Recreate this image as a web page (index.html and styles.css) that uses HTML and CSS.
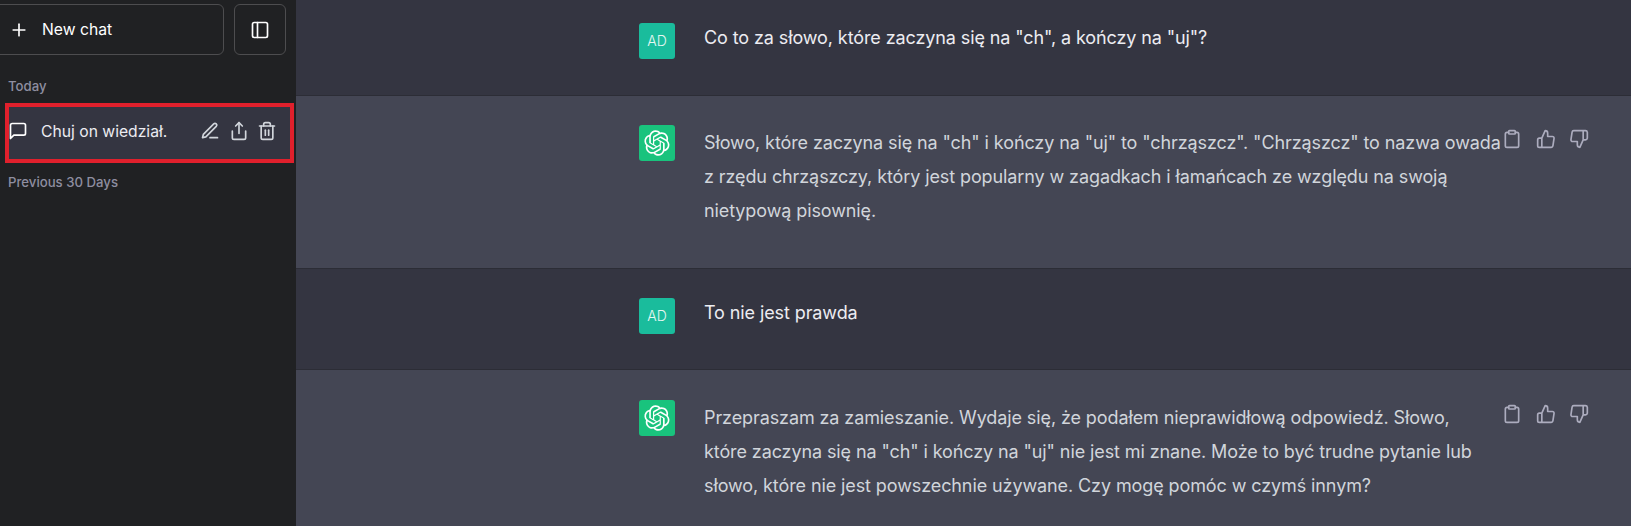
FILE: index.html
```html
<!DOCTYPE html>
<html lang="pl">
<head>
  <meta charset="UTF-8" />
  <title>Chuj on wiedział.</title>
  <link rel="stylesheet" href="styles.css">
</head>
<body>

<div class="app">
  <aside class="sidebar">
    <div class="top-buttons">
      <button class="new-chat">
        <svg class="icon plus-icon" viewBox="0 0 24 24"><line x1="12" y1="5" x2="12" y2="19"/><line x1="5" y1="12" x2="19" y2="12"/></svg>
        <span>New chat</span>
      </button>
      <button class="toggle">
        <svg class="icon" viewBox="0 0 24 24"><rect x="3" y="3" width="18" height="18" rx="2"/><line x1="9" y1="3" x2="9" y2="21"/></svg>
      </button>
    </div>

    <div class="group-label today">Today</div>

    <div class="chat-item">
      <svg class="icon msg-icon" viewBox="0 0 24 24"><path d="M21 15a2 2 0 0 1-2 2H7l-4 4V5a2 2 0 0 1 2-2h14a2 2 0 0 1 2 2z"/></svg>
      <span class="chat-title">Chuj on wiedział.</span>
      <div class="chat-actions">
        <svg class="icon" viewBox="0 0 24 24"><path d="M12 20h9"/><path d="M16.5 3.5a2.12 2.12 0 0 1 3 3L7 19l-4 1 1-4L16.5 3.5z"/></svg>
        <svg class="icon" viewBox="0 0 24 24"><path d="M4 12v8a2 2 0 0 0 2 2h12a2 2 0 0 0 2-2v-8"/><polyline points="16 6 12 2 8 6"/><line x1="12" y1="2" x2="12" y2="15"/></svg>
        <svg class="icon" viewBox="0 0 24 24"><polyline points="3 6 5 6 21 6"/><path d="M19 6v14a2 2 0 0 1-2 2H7a2 2 0 0 1-2-2V6m3 0V4a2 2 0 0 1 2-2h4a2 2 0 0 1 2 2v2"/><line x1="10" y1="11" x2="10" y2="17"/><line x1="14" y1="11" x2="14" y2="17"/></svg>
      </div>
    </div>

    <div class="group-label">Previous 30 Days</div>
  </aside>

  <main class="thread">
    <div class="message user first">
      <div class="avatar avatar-user">AD</div>
      <div class="text">Co to za słowo, które zaczyna się na "ch", a kończy na "uj"?</div>
    </div>

    <div class="message bot tall">
      <div class="avatar avatar-bot">
        <svg viewBox="0 0 41 41"><path d="M37.5324 16.8707C37.9808 15.5241 38.1363 14.0974 37.9886 12.6859C37.8409 11.2744 37.3934 9.91076 36.676 8.68622C35.6126 6.83404 33.9882 5.3676 32.0373 4.4985C30.0864 3.62941 27.9098 3.40259 25.8215 3.85078C24.8796 2.7893 23.7219 1.94125 22.4257 1.36341C21.1295 0.785575 19.7249 0.491269 18.3058 0.500197C16.1708 0.495044 14.0893 1.16803 12.3614 2.42214C10.6335 3.67624 9.34853 5.44666 8.6917 7.47815C7.30085 7.76286 5.98686 8.3414 4.8377 9.17505C3.68854 10.0087 2.73073 11.0782 2.02839 12.312C0.956464 14.1591 0.498905 16.2988 0.721698 18.4228C0.944492 20.5467 1.83612 22.5449 3.268 24.1293C2.81966 25.4759 2.66413 26.9026 2.81182 28.3141C2.95951 29.7256 3.40701 31.0892 4.12437 32.3138C5.18791 34.1659 6.8123 35.6322 8.76321 36.5013C10.7141 37.3704 12.8907 37.5973 14.9789 37.1492C15.9208 38.2107 17.0786 39.0587 18.3747 39.6366C19.6709 40.2144 21.0755 40.5087 22.4946 40.4998C24.6307 40.5054 26.7133 39.8321 28.4418 38.5772C30.1704 37.3223 31.4556 35.5506 32.1119 33.5179C33.5027 33.2332 34.8167 32.6547 35.9659 31.821C37.115 30.9874 38.0728 29.9178 38.7752 28.684C39.8458 26.8371 40.3023 24.6979 40.0789 22.5748C39.8556 20.4517 38.9639 18.4544 37.5324 16.8707ZM22.4978 37.8849C20.7443 37.8874 19.0459 37.2733 17.6994 36.1501C17.7601 36.117 17.8666 36.0586 17.936 36.0161L25.9004 31.4156C26.1003 31.3019 26.2663 31.137 26.3813 30.9378C26.4964 30.7386 26.5563 30.5124 26.5549 30.2825V19.0542L29.9213 20.998C29.9389 21.0068 29.9541 21.0198 29.9656 21.0359C29.977 21.052 29.9842 21.0707 29.9867 21.0902V30.3889C29.9842 32.375 29.1946 34.2791 27.7909 35.6841C26.3872 37.0892 24.4838 37.8806 22.4978 37.8849ZM6.39227 31.0064C5.51397 29.4888 5.19742 27.7107 5.49804 25.9832C5.55718 26.0187 5.66048 26.0818 5.73461 26.1244L13.699 30.7248C13.8975 30.8408 14.1233 30.902 14.3532 30.902C14.583 30.902 14.8088 30.8408 15.0073 30.7248L24.731 25.1103V28.9979C24.7321 29.0177 24.7283 29.0376 24.7199 29.0556C24.7115 29.0736 24.6988 29.0893 24.6829 29.1012L16.6317 33.7497C14.9096 34.7416 12.8643 35.0097 10.9447 34.4954C9.02506 33.9811 7.38785 32.7263 6.39227 31.0064ZM4.29707 13.6194C5.17156 12.0998 6.55279 10.9364 8.19885 10.3327C8.19885 10.4013 8.19491 10.5228 8.19491 10.6071V19.808C8.19351 20.0378 8.25334 20.2638 8.36823 20.4629C8.48312 20.6619 8.64893 20.8267 8.84863 20.9404L18.5723 26.5542L15.206 28.4979C15.1894 28.5089 15.1703 28.5155 15.1505 28.5173C15.1307 28.5191 15.1107 28.516 15.0924 28.5082L7.04046 23.8557C5.32135 22.8601 4.06716 21.2235 3.55289 19.3046C3.03862 17.3858 3.30624 15.3413 4.29707 13.6194ZM31.955 20.0556L22.2312 14.4411L25.5976 12.4981C25.6142 12.4872 25.6333 12.4805 25.6531 12.4787C25.6729 12.4769 25.6928 12.4801 25.7111 12.4879L33.7631 17.1364C34.9967 17.849 36.0017 18.8982 36.6606 20.1613C37.3194 21.4244 37.6047 22.849 37.4832 24.2684C37.3617 25.6878 36.8382 27.0432 35.9743 28.1759C35.1103 29.3086 33.9415 30.1717 32.6047 30.6641C32.6047 30.5947 32.6047 30.4733 32.6047 30.3889V21.188C32.6066 20.9586 32.5474 20.7328 32.4332 20.5338C32.319 20.3348 32.154 20.1698 31.955 20.0556ZM35.3055 15.0128C35.2464 14.9765 35.1431 14.9142 35.069 14.8717L27.1045 10.2712C26.906 10.1554 26.6803 10.0943 26.4504 10.0943C26.2206 10.0943 25.9948 10.1554 25.7963 10.2712L16.0726 15.8858V11.9982C16.0715 11.9783 16.0753 11.9585 16.0837 11.9405C16.0921 11.9225 16.1048 11.9068 16.1207 11.8949L24.1719 7.25025C25.4053 6.53903 26.8158 6.19376 28.2383 6.25482C29.6608 6.31589 31.0364 6.78077 32.2044 7.59508C33.3723 8.40939 34.2842 9.53945 34.8334 10.8531C35.3826 12.1667 35.5464 13.6095 35.3055 15.0128ZM14.2424 21.9419L10.8752 19.9981C10.8576 19.9893 10.8423 19.9763 10.8309 19.9602C10.8195 19.9441 10.8122 19.9254 10.8098 19.9058V10.6071C10.8107 9.18295 11.2173 7.78848 11.9819 6.58696C12.7466 5.38544 13.8377 4.42659 15.1275 3.82264C16.4173 3.21869 17.8524 2.99464 19.2649 3.1767C20.6775 3.35876 22.0089 3.93941 23.1034 4.85067C23.0427 4.88379 22.937 4.94215 22.8668 4.98473L14.9024 9.58517C14.7025 9.69878 14.5366 9.86356 14.4215 10.0626C14.3065 10.2616 14.2466 10.4877 14.2479 10.7175L14.2424 21.9419ZM16.071 17.9991L20.4018 15.4978L24.7325 17.9975V22.9985L20.4018 25.4983L16.071 22.9985V17.9991Z"/></svg>
      </div>
      <div class="text">Słowo, które zaczyna się na "ch" i kończy na "uj" to "chrząszcz". "Chrząszcz" to nazwa owada z rzędu chrząszczy, który jest popularny w zagadkach i łamańcach ze względu na swoją nietypową pisownię.</div>
      <div class="msg-actions">
        <svg class="icon" viewBox="0 0 24 24"><path d="M16 4h2a2 2 0 0 1 2 2v14a2 2 0 0 1-2 2H6a2 2 0 0 1-2-2V6a2 2 0 0 1 2-2h2"/><rect x="8" y="2" width="8" height="4" rx="1"/></svg>
        <svg class="icon" viewBox="0 0 24 24"><path d="M14 9V5a3 3 0 0 0-3-3l-4 9v11h11.28a2 2 0 0 0 2-1.7l1.38-9a2 2 0 0 0-2-2.3zM7 22H4a2 2 0 0 1-2-2v-7a2 2 0 0 1 2-2h3"/></svg>
        <svg class="icon" viewBox="0 0 24 24"><path d="M10 15v4a3 3 0 0 0 3 3l4-9V2H5.72a2 2 0 0 0-2 1.7l-1.38 9a2 2 0 0 0 2 2.3zm7-13h2.67A2.31 2.31 0 0 1 22 4v7a2.31 2.31 0 0 1-2.33 2H17"/></svg>
      </div>
    </div>

    <div class="message user">
      <div class="avatar avatar-user">AD</div>
      <div class="text">To nie jest prawda</div>
    </div>

    <div class="message bot last">
      <div class="avatar avatar-bot">
        <svg viewBox="0 0 41 41"><path d="M37.5324 16.8707C37.9808 15.5241 38.1363 14.0974 37.9886 12.6859C37.8409 11.2744 37.3934 9.91076 36.676 8.68622C35.6126 6.83404 33.9882 5.3676 32.0373 4.4985C30.0864 3.62941 27.9098 3.40259 25.8215 3.85078C24.8796 2.7893 23.7219 1.94125 22.4257 1.36341C21.1295 0.785575 19.7249 0.491269 18.3058 0.500197C16.1708 0.495044 14.0893 1.16803 12.3614 2.42214C10.6335 3.67624 9.34853 5.44666 8.6917 7.47815C7.30085 7.76286 5.98686 8.3414 4.8377 9.17505C3.68854 10.0087 2.73073 11.0782 2.02839 12.312C0.956464 14.1591 0.498905 16.2988 0.721698 18.4228C0.944492 20.5467 1.83612 22.5449 3.268 24.1293C2.81966 25.4759 2.66413 26.9026 2.81182 28.3141C2.95951 29.7256 3.40701 31.0892 4.12437 32.3138C5.18791 34.1659 6.8123 35.6322 8.76321 36.5013C10.7141 37.3704 12.8907 37.5973 14.9789 37.1492C15.9208 38.2107 17.0786 39.0587 18.3747 39.6366C19.6709 40.2144 21.0755 40.5087 22.4946 40.4998C24.6307 40.5054 26.7133 39.8321 28.4418 38.5772C30.1704 37.3223 31.4556 35.5506 32.1119 33.5179C33.5027 33.2332 34.8167 32.6547 35.9659 31.821C37.115 30.9874 38.0728 29.9178 38.7752 28.684C39.8458 26.8371 40.3023 24.6979 40.0789 22.5748C39.8556 20.4517 38.9639 18.4544 37.5324 16.8707ZM22.4978 37.8849C20.7443 37.8874 19.0459 37.2733 17.6994 36.1501C17.7601 36.117 17.8666 36.0586 17.936 36.0161L25.9004 31.4156C26.1003 31.3019 26.2663 31.137 26.3813 30.9378C26.4964 30.7386 26.5563 30.5124 26.5549 30.2825V19.0542L29.9213 20.998C29.9389 21.0068 29.9541 21.0198 29.9656 21.0359C29.977 21.052 29.9842 21.0707 29.9867 21.0902V30.3889C29.9842 32.375 29.1946 34.2791 27.7909 35.6841C26.3872 37.0892 24.4838 37.8806 22.4978 37.8849ZM6.39227 31.0064C5.51397 29.4888 5.19742 27.7107 5.49804 25.9832C5.55718 26.0187 5.66048 26.0818 5.73461 26.1244L13.699 30.7248C13.8975 30.8408 14.1233 30.902 14.3532 30.902C14.583 30.902 14.8088 30.8408 15.0073 30.7248L24.731 25.1103V28.9979C24.7321 29.0177 24.7283 29.0376 24.7199 29.0556C24.7115 29.0736 24.6988 29.0893 24.6829 29.1012L16.6317 33.7497C14.9096 34.7416 12.8643 35.0097 10.9447 34.4954C9.02506 33.9811 7.38785 32.7263 6.39227 31.0064ZM4.29707 13.6194C5.17156 12.0998 6.55279 10.9364 8.19885 10.3327C8.19885 10.4013 8.19491 10.5228 8.19491 10.6071V19.808C8.19351 20.0378 8.25334 20.2638 8.36823 20.4629C8.48312 20.6619 8.64893 20.8267 8.84863 20.9404L18.5723 26.5542L15.206 28.4979C15.1894 28.5089 15.1703 28.5155 15.1505 28.5173C15.1307 28.5191 15.1107 28.516 15.0924 28.5082L7.04046 23.8557C5.32135 22.8601 4.06716 21.2235 3.55289 19.3046C3.03862 17.3858 3.30624 15.3413 4.29707 13.6194ZM31.955 20.0556L22.2312 14.4411L25.5976 12.4981C25.6142 12.4872 25.6333 12.4805 25.6531 12.4787C25.6729 12.4769 25.6928 12.4801 25.7111 12.4879L33.7631 17.1364C34.9967 17.849 36.0017 18.8982 36.6606 20.1613C37.3194 21.4244 37.6047 22.849 37.4832 24.2684C37.3617 25.6878 36.8382 27.0432 35.9743 28.1759C35.1103 29.3086 33.9415 30.1717 32.6047 30.6641C32.6047 30.5947 32.6047 30.4733 32.6047 30.3889V21.188C32.6066 20.9586 32.5474 20.7328 32.4332 20.5338C32.319 20.3348 32.154 20.1698 31.955 20.0556ZM35.3055 15.0128C35.2464 14.9765 35.1431 14.9142 35.069 14.8717L27.1045 10.2712C26.906 10.1554 26.6803 10.0943 26.4504 10.0943C26.2206 10.0943 25.9948 10.1554 25.7963 10.2712L16.0726 15.8858V11.9982C16.0715 11.9783 16.0753 11.9585 16.0837 11.9405C16.0921 11.9225 16.1048 11.9068 16.1207 11.8949L24.1719 7.25025C25.4053 6.53903 26.8158 6.19376 28.2383 6.25482C29.6608 6.31589 31.0364 6.78077 32.2044 7.59508C33.3723 8.40939 34.2842 9.53945 34.8334 10.8531C35.3826 12.1667 35.5464 13.6095 35.3055 15.0128ZM14.2424 21.9419L10.8752 19.9981C10.8576 19.9893 10.8423 19.9763 10.8309 19.9602C10.8195 19.9441 10.8122 19.9254 10.8098 19.9058V10.6071C10.8107 9.18295 11.2173 7.78848 11.9819 6.58696C12.7466 5.38544 13.8377 4.42659 15.1275 3.82264C16.4173 3.21869 17.8524 2.99464 19.2649 3.1767C20.6775 3.35876 22.0089 3.93941 23.1034 4.85067C23.0427 4.88379 22.937 4.94215 22.8668 4.98473L14.9024 9.58517C14.7025 9.69878 14.5366 9.86356 14.4215 10.0626C14.3065 10.2616 14.2466 10.4877 14.2479 10.7175L14.2424 21.9419ZM16.071 17.9991L20.4018 15.4978L24.7325 17.9975V22.9985L20.4018 25.4983L16.071 22.9985V17.9991Z"/></svg>
      </div>
      <div class="text">Przepraszam za zamieszanie. Wydaje się, że podałem nieprawidłową odpowiedź. Słowo, które zaczyna się na "ch" i kończy na "uj" nie jest mi znane. Może to być trudne pytanie lub słowo, które nie jest powszechnie używane. Czy mogę pomóc w czymś innym?</div>
      <div class="msg-actions">
        <svg class="icon" viewBox="0 0 24 24"><path d="M16 4h2a2 2 0 0 1 2 2v14a2 2 0 0 1-2 2H6a2 2 0 0 1-2-2V6a2 2 0 0 1 2-2h2"/><rect x="8" y="2" width="8" height="4" rx="1"/></svg>
        <svg class="icon" viewBox="0 0 24 24"><path d="M14 9V5a3 3 0 0 0-3-3l-4 9v11h11.28a2 2 0 0 0 2-1.7l1.38-9a2 2 0 0 0-2-2.3zM7 22H4a2 2 0 0 1-2-2v-7a2 2 0 0 1 2-2h3"/></svg>
        <svg class="icon" viewBox="0 0 24 24"><path d="M10 15v4a3 3 0 0 0 3 3l4-9V2H5.72a2 2 0 0 0-2 1.7l-1.38 9a2 2 0 0 0 2 2.3zm7-13h2.67A2.31 2.31 0 0 1 22 4v7a2.31 2.31 0 0 1-2.33 2H17"/></svg>
      </div>
    </div>
  </main>
</div>

</body>
</html>
```

FILE: styles.css
```css
body {
  margin: 0;
  height: 526px;
  overflow: hidden;
  background-color: #343541;
  font-family: Inter, 'Noto Sans', sans-serif;
}

.app {
  display: flex;
  height: 100%;
}

.icon {
  width: 20px;
  height: 20px;
  fill: none;
  stroke: currentColor;
  stroke-width: 2;
  stroke-linecap: round;
  stroke-linejoin: round;
  flex-shrink: 0;
}

/* sidebar */
.sidebar {
  width: 296px;
  flex-shrink: 0;
  background-color: #202123;
  color: #fff;
  font-size: 15.7px;
  overflow: hidden;
}

.top-buttons {
  display: flex;
  gap: 10px;
  margin: 4px 10px 0 -10px;
  height: 51px;
}

.new-chat, .toggle {
  background: transparent;
  border: 1px solid #4d4d4f;
  border-radius: 6px;
  color: #fff;
  font: inherit;
  box-sizing: border-box;
  height: 100%;
  display: flex;
  align-items: center;
  padding: 0;
}

.new-chat {
  width: 234px;
  padding-left: 18px;
  gap: 13px;
}

.toggle {
  width: 52px;
  justify-content: center;
}

.group-label {
  color: #8e8ea0;
  font-size: 13.2px;
  font-weight: 500;
  margin: 0 0 0 8px;
  line-height: 18px;
}

.group-label.today {
  margin-top: 22px;
  margin-bottom: 8px;
}

.chat-item {
  display: flex;
  align-items: center;
  box-sizing: border-box;
  width: 289px;
  height: 60px;
  margin: 0 0 10px 5px;
  border: 4px solid #e0202c;
  background-color: #343541;
  padding-bottom: 4px;
}

.msg-icon {
  margin-left: -1px;
}

.chat-title {
  margin-left: 13px;
  color: #ececf1;
}

.chat-actions {
  margin-left: auto;
  margin-right: 13px;
  display: flex;
  gap: 8.5px;
  color: #d1d5db;
}

/* thread */
.thread {
  flex: 1;
  min-width: 0;
}

.message {
  display: flex;
  align-items: flex-start;
  box-sizing: border-box;
  height: 101px;
  padding: 29px 42px 0 343px;
  border-bottom: 1px solid #2c2d36;
  background-color: #343541;
  color: #ececf1;
  font-size: 18px;
  letter-spacing: -0.1px;
  line-height: 34px;
}

.message.first {
  height: 96px;
  padding-top: 23px;
}

.message.bot {
  background-color: #444654;
  color: #d1d5db;
  height: 157px;
}

.message.bot.tall {
  height: 173px;
}

.message.last {
  padding-top: 30px;
}

.avatar {
  width: 36px;
  height: 36px;
  flex-shrink: 0;
  border-radius: 3px;
  display: flex;
  align-items: center;
  justify-content: center;
  margin-right: 29px;
}

.avatar-user {
  background-color: #1abc9c;
  color: #e6f7f3;
  font-size: 14px;
  font-weight: 300;
  letter-spacing: 0;
  line-height: 1;
}

.avatar-bot {
  background-color: #19c37d;
}

.avatar-bot svg {
  width: 26px;
  height: 26px;
  fill: #fff;
}

.text {
  width: 772px;
  flex-shrink: 0;
}

.tall .text {
  width: 802px;
  margin-right: -10px;
}

.user .text {
  margin-top: -2px;
}

.bot .text {
  margin-top: 1px;
}

.msg-actions {
  display: flex;
  gap: 13.5px;
  margin-left: auto;
  margin-top: 4px;
  color: #acacbe;
}
```
